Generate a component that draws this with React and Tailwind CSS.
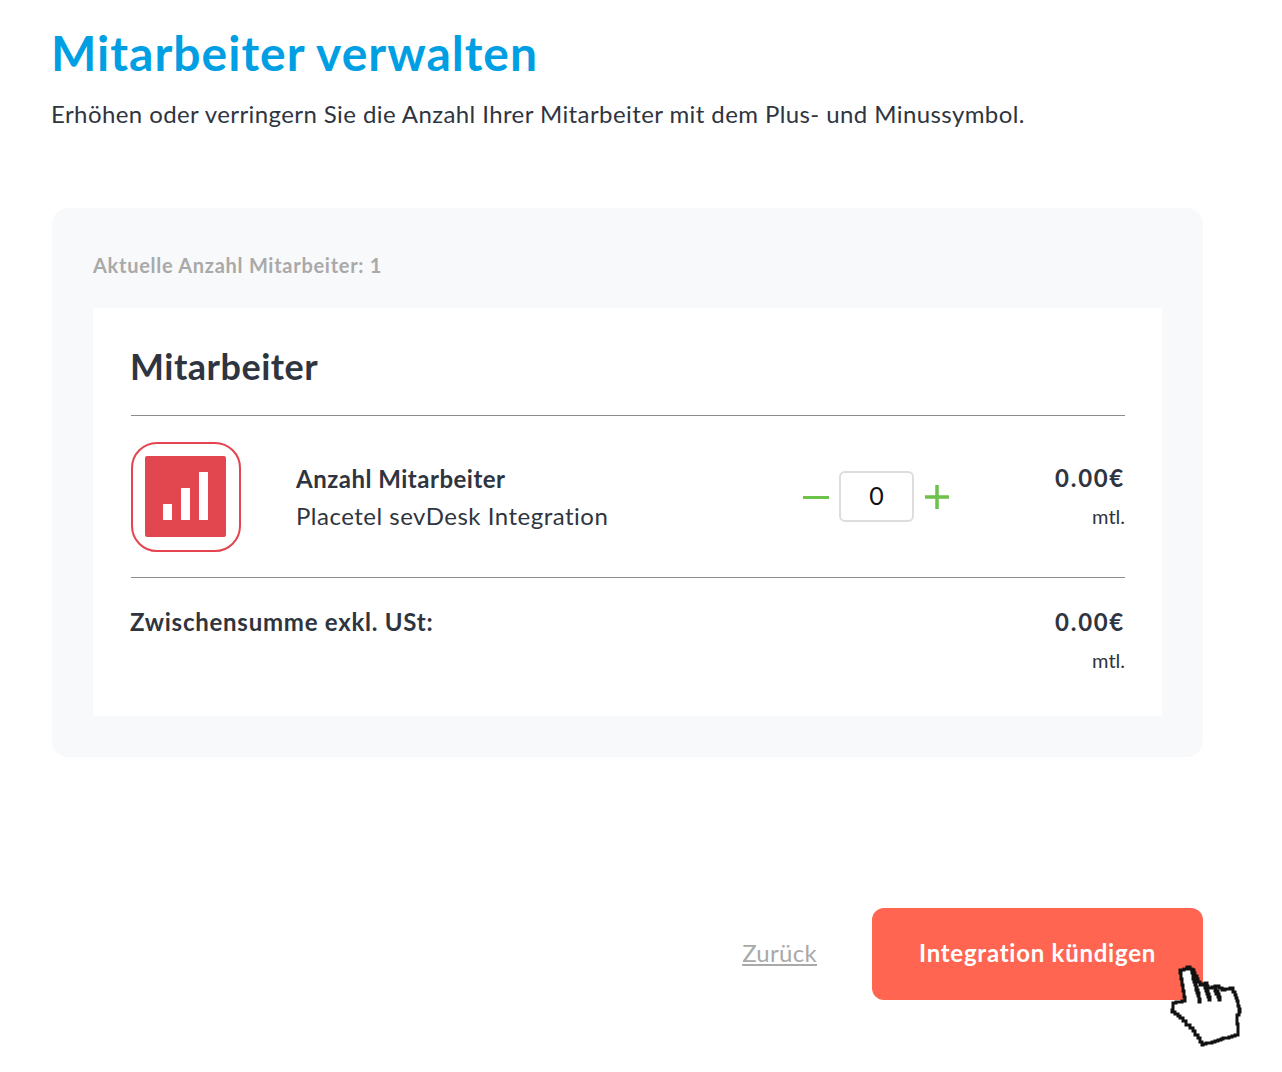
import { useState } from "react";

const font = "font-['Lato','Open_Sans',sans-serif]";

// outline of the pointer, turned into small stair steps so it looks like a pixel cursor
const handPoints = [
  [30, 20], [37, 17], [42, 20], [50, 35], [55, 33], [58, 38], [65, 36], [72, 40], [80, 38], [85, 45],
  [90, 62], [87, 68], [88, 85], [53, 95], [50, 88], [43, 78], [33, 68], [22, 60], [23, 53], [35, 50],
];

const stepped = (points, step = 3) => {
  let d = `M${points[0][0]} ${points[0][1]}`;
  points.forEach(([x, y], i) => {
    const [nx, ny] = points[(i + 1) % points.length];
    const count = Math.max(1, Math.round(Math.max(Math.abs(nx - x), Math.abs(ny - y)) / step));
    for (let s = 1; s <= count; s++) {
      d += ` H${Math.round(x + ((nx - x) * s) / count)} V${Math.round(y + ((ny - y) * s) / count)}`;
    }
  });
  return `${d} Z`;
};

function BarsLogo() {
  return (
    <div className="flex h-[110px] w-[110px] shrink-0 items-center justify-center rounded-[26px] border-2 border-[#e4434f] pb-[2px] pr-[2px]">
      <svg width="81" height="81" viewBox="0 0 81 81">
        <rect width="81" height="81" rx="2" fill="#e2474f" />
        <rect x="18" y="48" width="9" height="16" fill="#fff" />
        <rect x="36" y="32" width="9" height="32" fill="#fff" />
        <rect x="54" y="16" width="9" height="48" fill="#fff" />
      </svg>
    </div>
  );
}

function HandCursor() {
  return (
    <svg className="absolute left-[1150px] top-[950px]" width="100" height="105" viewBox="0 0 100 105">
      <path d={stepped(handPoints)} fill="#fff" stroke="#111" strokeWidth="3" />
      <path d={stepped([[42, 20], [50, 52]])} fill="none" stroke="#111" strokeWidth="3" />
      <path d={stepped([[55, 35], [60, 50]])} fill="none" stroke="#111" strokeWidth="3" />
      <path d={stepped([[65, 38], [70, 50]])} fill="none" stroke="#111" strokeWidth="3" />
    </svg>
  );
}

export default function App() {
  const [count, setCount] = useState(0);

  return (
    <div className={`${font} relative h-[1072px] w-[1282px] bg-white pl-[52px] pr-[79px] pt-[25px] text-[#2f3540]`}>
      <h1 className="-ml-px text-[48px] font-bold leading-[56px] tracking-[1px] text-[#009fe3]">Mitarbeiter verwalten</h1>
      <p className="-ml-px mt-[17px] text-[24px] leading-[32px] tracking-[0.41px]">
        Erhöhen oder verringern Sie die Anzahl Ihrer Mitarbeiter mit dem Plus- und Minussymbol.
      </p>

      <section className="mt-[78px] h-[549px] rounded-[16px] bg-[#f8f9fa] px-[41px] pt-[45px]">
        <div className="text-[20px] font-bold leading-[24px] tracking-[0.72px] text-[#a9a9a9]">Aktuelle Anzahl Mitarbeiter: 1</div>

        <div className="mt-[31px] h-[408px] bg-white pl-[38px] pr-[37px] pt-[34px]">
          <h2 className="-ml-px text-[36px] font-bold leading-[48px] tracking-[0.5px]">Mitarbeiter</h2>
          <div className="mt-[25px] h-px bg-[#8c8c8c]" />

          <div className="flex h-[162px] items-center border-b border-[#8c8c8c] pt-[1px]">
            <BarsLogo />
            <div className="ml-[55px] w-[507px] tracking-[0.5px]">
              <div className="text-[24px] font-bold leading-[38px]">Anzahl Mitarbeiter</div>
              <div className="-mt-px text-[24px] leading-[38px]">Placetel sevDesk Integration</div>
            </div>
            <div className="flex items-center">
              <button type="button" onClick={() => setCount(Math.max(0, count - 1))} className="h-[3px] w-[26px] bg-[#6cc24a]" aria-label="Minus" />
              <div className="mb-[2px] ml-[10px] flex h-[51px] w-[75px] items-center justify-center rounded-[6px] border-2 border-[#dddddd] text-[25px] text-[#111]">
                {count}
              </div>
              <button type="button" onClick={() => setCount(count + 1)} className="ml-[11px] text-[#6cc24a]" aria-label="Plus">
                <svg width="24" height="24" viewBox="0 0 24 24" className="block">
                  <path d="M12 0v24M0 12h24" stroke="currentColor" strokeWidth="3.5" />
                </svg>
              </button>
            </div>
            <div className="ml-auto text-right">
              <div className="text-[24px] font-bold leading-[38px] tracking-[1.7px]">0.00€</div>
              <div className="text-[20px] leading-[38px]">mtl.</div>
            </div>
          </div>

          <div className="mt-[25px] flex items-start justify-between">
            <div className="-ml-px text-[24px] font-bold leading-[38px] tracking-[0.75px]">Zwischensumme exkl. USt:</div>
            <div className="text-right">
              <div className="text-[24px] font-bold leading-[38px] tracking-[1.7px]">0.00€</div>
              <div className="text-[20px] leading-[38px]">mtl.</div>
            </div>
          </div>
        </div>
      </section>

      <div className="mt-[151px] flex items-center justify-end">
        <a href="#" className="mb-[3px] text-[24px] tracking-[0.3px] text-[#a9a9a9] underline">Zurück</a>
        <button type="button" className="ml-[55px] h-[92px] w-[331px] rounded-[12px] bg-[#ff6550] pb-[2px] text-[24px] font-bold tracking-[0.75px] text-white">
          Integration kündigen
        </button>
      </div>

      <HandCursor />
    </div>
  );
}
